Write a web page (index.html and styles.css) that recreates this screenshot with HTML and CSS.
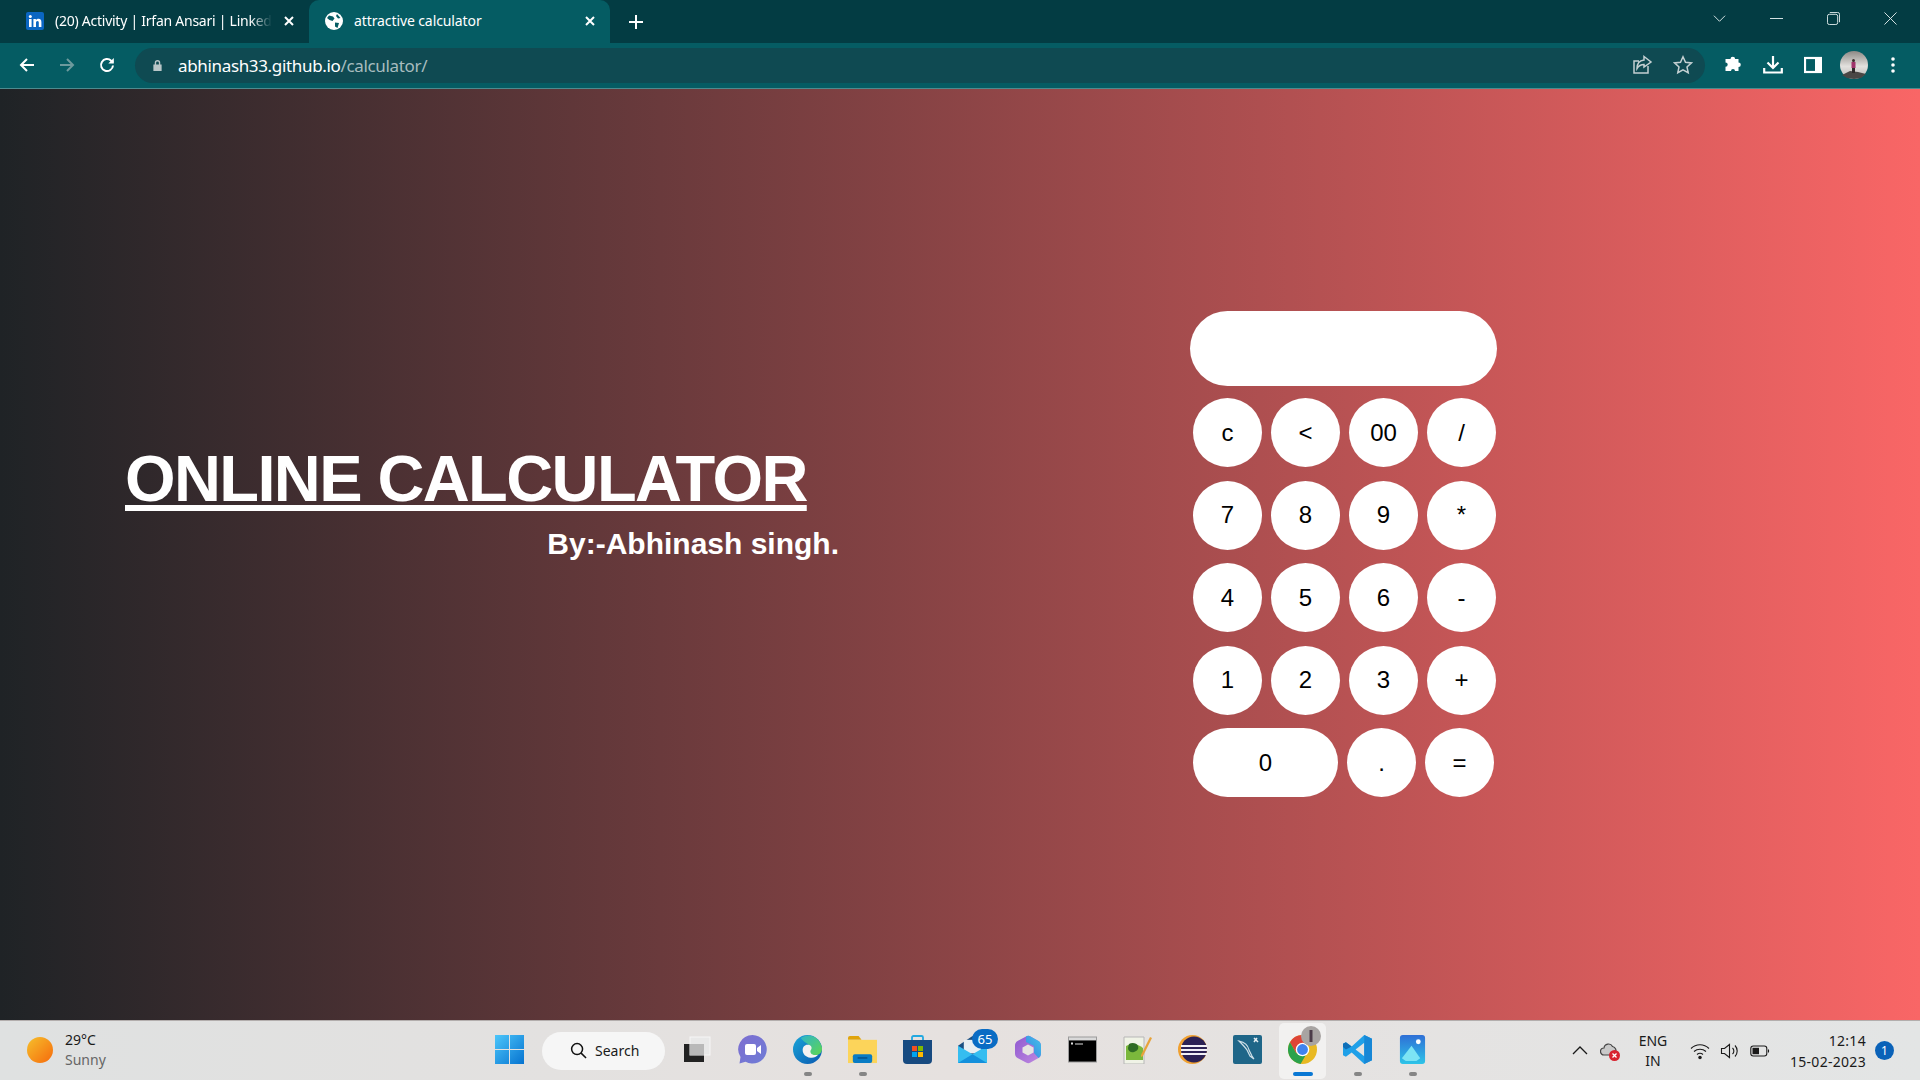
FILE: index.html
```html
<!DOCTYPE html>
<html>
<head>
    <title>attractive calculator</title>
    <link rel="stylesheet" href="styles.css">
</head>
<body>
    <!-- browser chrome -->
    <div class="tabstrip">
        <div class="tab">
            <svg class="favicon" viewBox="0 0 18 18"><rect width="18" height="18" rx="2" fill="#0a66c2"/><rect x="3" y="7" width="2.6" height="8" fill="#fff"/><circle cx="4.3" cy="4.4" r="1.5" fill="#fff"/><path d="M7.4 7h2.5v1.2c.5-.8 1.4-1.4 2.6-1.4 2.2 0 2.9 1.400 2.900 3.500V15h-2.600v-4.200c0-1-.3-1.800-1.300-1.800s-1.500.8-1.500 1.800V15H7.400z" fill="#fff"/></svg>
            <span class="tab-title fade">(20) Activity | Irfan Ansari | Linked</span>
            <svg class="tab-close" viewBox="0 0 12 12"><path d="M2 2l8 8M10 2l-8 8"/></svg>
        </div>
        <div class="tab active">
            <svg class="favicon" viewBox="0 0 18 18"><circle cx="9" cy="9" r="9" fill="#fff"/><path d="M4 3.500l4 1 1.500 2-2 2.500-3-1-2.500-2zM10 10.500l4 .5-1.500 5-2.500-1.500zM12 2l3.500 4-2.500 .5-2-2.500z" fill="#055c63"/></svg>
            <span class="tab-title">attractive calculator</span>
            <svg class="tab-close" viewBox="0 0 12 12"><path d="M2 2l8 8M10 2l-8 8"/></svg>
        </div>
        <svg class="new-tab" viewBox="0 0 16 16"><path d="M8 1v14M1 8h14"/></svg>
        <div class="win-controls">
            <svg class="win-btn chevron" viewBox="0 0 14 14"><path d="M1 4l6 6 6-6"/></svg>
            <svg class="win-btn" viewBox="0 0 14 14"><path d="M0 7h14"/></svg>
            <svg class="win-btn" viewBox="0 0 14 14"><rect x=".5" y="2.500" width="11" height="11" rx="2"/><path d="M3 .5h8.500a2 2 0 0 1 2 2V11"/></svg>
            <svg class="win-btn" viewBox="0 0 14 14"><path d="M.5 .5l13 13M13.500 .5l-13 13"/></svg>
        </div>
    </div>
    <div class="toolbar">
        <svg class="nav-icon" viewBox="0 0 18 18"><path d="M16 9H3M9 3L3 9l6 6"/></svg>
        <svg class="nav-icon dim" viewBox="0 0 18 18"><path d="M2 9h13M9 3l6 6-6 6"/></svg>
        <svg class="nav-icon" viewBox="0 0 18 18"><path d="M15 9.500A6 6 0 1 1 13.200 4.700L15 6.500"/><path class="solid" d="M15.800 2v5.500h-5.500z"/></svg>
        <div class="omnibox">
            <svg class="lock" viewBox="0 0 12 14"><path d="M3 6V4a3 3 0 0 1 6 0v2h1.500v7h-9V6zM4.500 6h3V4a1.500 1.500 0 0 0-3 0z"/></svg>
            <span class="url">abhinash33.github.io<span class="url-path">/calculator/</span></span>
            <svg class="omni-icon share" viewBox="0 0 20 20"><path d="M15 11v7H1V6h5M11 1.500l7 5.500-7 5V9.500c-3.500 0-5.500 1.500-7 4 0-5 3-8 7-8.500z"/></svg>
            <svg class="omni-icon" viewBox="0 0 20 20"><path d="M10 1.800l2.500 5.400 5.900.7-4.400 4 1.200 5.800-5.200-2.900-5.200 2.900 1.200-5.800-4.400-4 5.900-.7z"/></svg>
        </div>
        <svg class="tool-icon puzzle" viewBox="0 0 18 18"><path d="M6 3a2.300 2.300 0 0 1 4.600 0H14v3.500a2.300 2.300 0 0 1 0 4.600V15H10.500a2 2 0 0 0-4 0H1v-4.200a2.200 2.200 0 0 0 0-4.400V3z"/></svg>
        <svg class="tool-icon stroke download" viewBox="0 0 20 18"><path d="M10 0v11M4.500 6.500L10 12l5.500-5.500M1.200 12v4.500h17.600V12"/></svg>
        <svg class="tool-icon stroke panel" viewBox="0 0 18 16"><rect x="1" y="1" width="16" height="14"/><rect class="solid" x="11" y="1" width="6" height="14"/></svg>
        <svg class="avatar" viewBox="0 0 28 28">
            <defs><linearGradient id="sky" x1="0" y1="0" x2="0" y2="1"><stop offset="0" stop-color="#8d8985"/><stop offset=".55" stop-color="#e3e1de"/><stop offset="1" stop-color="#b9b6b4"/></linearGradient></defs>
            <circle cx="14" cy="14" r="14" fill="url(#sky)"/>
            <path d="M2 24l8-4 8 1 8 2-5 4-7 1-7-1z" fill="#4a4745"/>
            <rect x="11.500" y="11" width="4" height="6" fill="#a0336b"/><circle cx="13.500" cy="9.500" r="1.500" fill="#3a2a2a"/><rect x="12" y="17" width="3" height="5" fill="#2f2b2b"/>
        </svg>
        <svg class="menu-dots" viewBox="0 0 4 16"><circle cx="2" cy="2" r="1.800"/><circle cx="2" cy="8" r="1.800"/><circle cx="2" cy="14" r="1.800"/></svg>
    </div>

    <!-- the page itself -->
    <main class="page">
        <div class="hero">
            <h1>ONLINE CALCULATOR</h1>
            <h2>By:-Abhinash singh.</h2>
        </div>
        <form class="calc">
            <input class="display" type="text">
            <div class="row"><button type="button">c</button><button type="button">&lt;</button><button type="button">00</button><button type="button">/</button></div>
            <div class="row"><button type="button">7</button><button type="button">8</button><button type="button">9</button><button type="button">*</button></div>
            <div class="row"><button type="button">4</button><button type="button">5</button><button type="button">6</button><button type="button">-</button></div>
            <div class="row"><button type="button">1</button><button type="button">2</button><button type="button">3</button><button type="button">+</button></div>
            <div class="row"><button type="button" class="wide">0</button><button type="button">.</button><button type="button">=</button></div>
        </form>
    </main>

    <!-- windows taskbar -->
    <div class="taskbar">
        <div class="weather">
            <svg class="sun" viewBox="0 0 26 26">
                <defs><linearGradient id="sunfill" x1="0" y1="0" x2="1" y2="1"><stop offset="0" stop-color="#f6c02c"/><stop offset="1" stop-color="#f66a0c"/></linearGradient></defs>
                <circle cx="13" cy="13" r="13" fill="url(#sunfill)"/>
            </svg>
            <div class="weather-text"><span>29°C</span><span class="muted">Sunny</span></div>
        </div>
        <div class="slot">
            <svg class="app" viewBox="0 0 29 29">
                <defs><linearGradient id="win" x1="0" y1="0" x2="1" y2="1"><stop offset="0" stop-color="#4cc6fa"/><stop offset="1" stop-color="#0673d0"/></linearGradient></defs>
                <path d="M0 0h14v14H0zM15 0h14v14H15zM0 15h14v14H0zM15 15h14v14H15z" fill="url(#win)"/>
            </svg>
        </div>
        <div class="search">
            <svg class="search-icon" viewBox="0 0 18 18"><circle cx="7.500" cy="7.500" r="5.800"/><path d="M11.800 11.800L17 17"/></svg>
            <span>Search</span>
        </div>
        <div class="apps">
            <div class="slot">
                <svg class="app" viewBox="0 0 29 29"><rect x="1" y="9" width="20" height="18" fill="#222"/><rect x="7" y="2" width="20" height="18" fill="#e8e8e8" stroke="#f6f6f6"/><rect x="7" y="9" width="14" height="11" fill="#b9b9b9"/></svg>
            </div>
            <div class="slot">
                <svg class="app" viewBox="0 0 29 29">
                    <defs><linearGradient id="meet" x1="0" y1="0" x2="1" y2="1"><stop offset="0" stop-color="#7d6ed0"/><stop offset="1" stop-color="#6f7cd6"/></linearGradient></defs>
                    <path d="M14.500 0a14.300 14.300 0 1 1-7 26.800L1.500 28.500l1-6.500A14.300 14.300 0 0 1 14.500 0z" fill="url(#meet)"/>
                    <rect x="7" y="9" width="11" height="11" rx="2" fill="#fff"/><path d="M19 13l4-3v9l-4-3z" fill="#fff"/>
                </svg>
            </div>
            <div class="slot running">
                <svg class="app" viewBox="0 0 30 30">
                    <defs><linearGradient id="edge" x1="0" y1="0" x2="1" y2="1"><stop offset="0" stop-color="#1aa6d8"/><stop offset="1" stop-color="#0b58b0"/></linearGradient><linearGradient id="edge2" x1="0" y1="0" x2="1" y2="1"><stop offset="0" stop-color="#2fb5c8"/><stop offset="1" stop-color="#5fd64f"/></linearGradient></defs>
                    <circle cx="15" cy="15" r="15" fill="url(#edge)"/>
                    <path d="M8 3C15-2 27 0 30 13c.5 4-2 8-7 8-4 0-7-2-6-5 1-2 1-5-2-7-3-2-5-3-7-6z" fill="url(#edge2)"/>
                    <path d="M15 10c3 0 5 2 4 4.500-.5 1-1 1.500-1 2.500 0 3 4 4.500 8 3.500-2 2.500-5 3.500-8 3-5-.5-8-4-8-8 0-3 2-5.500 5-5.500z" fill="#f4f2f1"/>
                </svg>
            </div>
            <div class="slot running">
                <svg class="app" viewBox="0 0 30 28"><path d="M0 2a2 2 0 0 1 2-2h9l3 4h-14z" fill="#e0a40c"/><path d="M0 4h30v24H0z" fill="#fcd45a"/><rect x="5" y="19" width="20" height="9" rx="2" fill="#0a7cc4"/><rect x="10" y="22" width="10" height="1.500" fill="#07508a"/></svg>
            </div>
            <div class="slot">
                <svg class="app" viewBox="0 0 29 29"><path d="M9 7V2.500A1.500 1.500 0 0 1 10.500 1h8A1.500 1.500 0 0 1 20 2.500V7" fill="none" stroke="#22a8e0" stroke-width="1.800"/><path d="M0 5h29v20a4 4 0 0 1-4 4H4a4 4 0 0 1-4-4z" fill="#174a80"/><rect x="9" y="11" width="5" height="5" fill="#f25022"/><rect x="15" y="11" width="5" height="5" fill="#7fba00"/><rect x="9" y="17" width="5" height="5" fill="#00a4ef"/><rect x="15" y="17" width="5" height="5" fill="#ffb900"/></svg>
            </div>
            <div class="slot">
                <svg class="app" viewBox="0 0 30 28"><path d="M0 10L15 0l15 10v18H0z" fill="#1b4f82"/><path d="M6 4h18v14H6z" fill="#e8eef2"/><path d="M0 10l15 9 15-9v18H0z" fill="#35bdf0"/><path d="M0 28l15-9 15 9z" fill="#1490dc"/></svg>
                <span class="mail-badge">65</span>
            </div>
            <div class="slot">
                <svg class="app m365" viewBox="0 0 26 29">
                    <defs><linearGradient id="m1" x1="0" y1="0" x2="1" y2="1"><stop offset="0" stop-color="#8f58d0"/><stop offset="1" stop-color="#c08ae0"/></linearGradient><linearGradient id="m2" x1="0" y1="1" x2="1" y2="0"><stop offset="0" stop-color="#3c7fe0"/><stop offset="1" stop-color="#42c4ea"/></linearGradient></defs>
                    <path d="M11 1.500c1.500-1 3-1 4.500 0l8 4.500c1.500 1 2.500 2.500 2.500 4.500v8c0 2-1 3.500-2.500 4.500l-8 4.500c-1.500 1-3 1-4.500 0L2.500 23C1 22 0 20.500 0 18.500v-8C0 8.500 1 7 2.500 6z" fill="url(#m1)"/>
                    <path d="M11 1.500c1.500-1 3-1 4.500 0l8 4.500c1.500 1 2.500 2.500 2.500 4.500v8c0 2-1 3.500-2.500 4.500L19 18V11l-8-4z" fill="url(#m2)"/>
                    <path d="M13 9.500l5.500 3v5L13 20.500l-5.500-3v-5z" fill="#e6e3e1"/>
                </svg>
            </div>
            <div class="slot">
                <svg class="app" viewBox="0 0 29 26"><rect width="29" height="26" fill="#9b9b9b"/><rect x="1" y="1" width="27" height="3" fill="#d9d9d9"/><rect x="1" y="4" width="27" height="21" fill="#000"/><path d="M3 6h2v2H3zM7 7h8v1H7z" fill="#ddd"/></svg>
            </div>
            <div class="slot">
                <svg class="app" viewBox="0 0 29 29"><path d="M1 2h20v27H1z" fill="#f0f3e6" stroke="#b7b7b7"/><path d="M3 11c5-3 11-3 17 2v12H3z" fill="#7bb83c"/><path d="M6 9c3-2 8-1 9 2s-1 5-4 6-6-1-6-4z" fill="#2f6b24"/><path d="M18 20L27 2l2 1-9 18-2 1z" fill="#e8a33a"/></svg>
            </div>
            <div class="slot">
                <svg class="app" viewBox="0 0 29 29"><circle cx="14.500" cy="14.500" r="14.500" fill="#f0a030"/><circle cx="16" cy="14.500" r="13" fill="#2c2255"/><path d="M3 10h26v2H3zM3 14h26v2H3zM3 18h26v2H3z" fill="#f2f0f6"/></svg>
            </div>
            <div class="slot">
                <svg class="app" viewBox="0 0 29 29"><rect width="29" height="29" rx="2" fill="#1f6688"/><path d="M6 6c5 1 9 4 10 9l3 6 2 3-4-3-3-6C12 12 9 9 6 6z" fill="none" stroke="#cfe0e8" stroke-width="1.200"/><path d="M21 3l4 4M24 3l-3 4" stroke="#e6eef2" stroke-width="1.500"/></svg>
            </div>
            <div class="slot current">
                <svg class="app" viewBox="0 0 30 30">
                    <circle cx="15" cy="15" r="15" fill="#e8b923"/>
                    <path d="M15 0A15 15 0 0 0 2 7.500L8.500 19 15 9h13A15 15 0 0 0 15 0z" fill="#de4437"/>
                    <path d="M2 7.500A15 15 0 0 0 13 29.900L19.500 19l-11 0z" fill="#2ba24c"/>
                    <circle cx="15" cy="15" r="7" fill="#fff"/><circle cx="15" cy="15" r="5.600" fill="#3f83ee"/>
                </svg>
                <svg class="chrome-avatar" viewBox="0 0 20 20"><circle cx="10" cy="10" r="10" fill="#a8a4a2"/><rect x="8.500" y="4" width="3" height="12" fill="#4c3c48"/></svg>
            </div>
            <div class="slot running">
                <svg class="app" viewBox="0 0 30 30"><path d="M22 0l8 4v22l-8 4-13-12-6 4.500L0 21v-12l3-1.500 6 4.500z" fill="#1fa0e8"/><path d="M22 8l-9 7 9 7z" fill="#e4e3e2"/><path d="M22 0l8 4v22l-8 4V22V8z" fill="#1787d6"/><path d="M3 7.500l6 4.500-6 3-3-2.500v-3.500z" fill="#0f6fb8"/></svg>
            </div>
            <div class="slot running">
                <svg class="app" viewBox="0 0 26 30">
                    <defs><linearGradient id="ph" x1="0" y1="0" x2="0" y2="1"><stop offset="0" stop-color="#2f6fd6"/><stop offset="1" stop-color="#2dc4e8"/></linearGradient></defs>
                    <rect width="26" height="30" rx="3" fill="url(#ph)"/><circle cx="19" cy="7" r="2.500" fill="#fff"/><path d="M2 24L12 11l9 13-4 3H6z" fill="#7ce4f4"/>
                </svg>
            </div>
        </div>
        <div class="tray">
            <svg class="tray-chevron" viewBox="0 0 16 9"><path d="M1 8l7-7 7 7"/></svg>
            <svg class="tray-cloud" viewBox="0 0 20 20"><path d="M4 14a3.500 3.500 0 0 1 0-7 4.500 4.500 0 0 1 8.500-1.500A4 4 0 0 1 15 12v2z" fill="#c9c9c9" stroke="#444" stroke-width="1.200"/><circle cx="14.500" cy="14.500" r="5.500" fill="#d8232f"/><path d="M12.500 12.500l4 4M16.500 12.500l-4 4" stroke="#fff" stroke-width="1.300"/></svg>
            <div class="lang"><span>ENG</span><span>IN</span></div>
            <svg class="tray-icon" viewBox="0 0 20 20"><path d="M1 7.500c5-5 13-5 18 0M4 10.500c3.500-3 8.500-3 12 0M7 13.500c1.800-1.500 4.200-1.500 6 0"/><circle cx="10" cy="16.500" r="1.200" fill="#1a1a1a"/></svg>
            <svg class="tray-icon" viewBox="0 0 20 20"><path d="M1.500 7.500h3l5-4v13l-5-4h-3zM12.500 7a4 4 0 0 1 0 6M15 4.500a8 8 0 0 1 0 11"/></svg>
            <svg class="tray-icon" viewBox="0 0 20 20"><rect x=".8" y="5" width="16" height="10" rx="2.500"/><rect x="2.500" y="6.800" width="6.500" height="6.400" fill="#1a1a1a" stroke="none"/><path d="M18.500 8.500v3"/></svg>
            <div class="clock"><span>12:14</span><span>15-02-2023</span></div>
            <span class="notify">1</span>
        </div>
    </div>
</body>
</html>
```

FILE: styles.css
```css
* { box-sizing: border-box; }
html, body { margin: 0; height: 100%; }
body { width: 1920px; height: 1080px; overflow: hidden; display: flex; flex-direction: column; font-family: "Noto Sans", sans-serif; }
svg { display: block; flex-shrink: 0; }

/* tab strip */
.tabstrip { height: 43px; background: #033c43; display: flex; align-items: flex-end; padding-left: 8px; color: #fff; }
.tab { width: 301px; height: 43px; display: flex; align-items: center; padding: 0 14px 2px 18px; border-radius: 10px 10px 0 0; }
.tab.active { background: #055c63; padding-left: 16px; }
.favicon { width: 18px; height: 18px; }
.tab-title { margin-left: 11px; font-size: 14px; white-space: nowrap; letter-spacing: -.25px; }
.tab.active .tab-title { letter-spacing: -.1px; }
.fade { -webkit-mask-image: linear-gradient(to right, #000 90%, transparent); mask-image: linear-gradient(to right, #000 90%, transparent); }
.tab-close { width: 12px; height: 12px; margin-left: auto; fill: none; stroke: #fff; stroke-width: 2; }
.new-tab { width: 16px; height: 16px; margin: 0 0 13px 18px; fill: none; stroke: #fff; stroke-width: 2; }
.win-controls { margin-left: auto; height: 43px; display: flex; align-items: flex-start; padding: 12px 23px 0 0; gap: 44px; }
.win-btn { width: 13px; height: 13px; fill: none; stroke: #e4eeee; stroke-width: 1; }

/* toolbar */
.toolbar { height: 46px; background: #055c63; border-bottom: 1px solid #4d8b8f; display: flex; align-items: center; padding: 0 0 1px 18px; }
.nav-icon { width: 18px; height: 18px; margin-right: 22px; fill: none; stroke: #fff; stroke-width: 2; }
.nav-icon.dim { stroke: #6d9a9d; }
.nav-icon .solid { fill: #fff; stroke: none; }
.omnibox { width: 1570px; height: 35px; margin-left: -3px; border-radius: 18px; background: #0f4a52; display: flex; align-items: center; padding: 0 12px 0 17px; }
.lock { width: 11px; height: 13px; fill: #b9c6c8; }
.url { flex: 1; margin-left: 15px; font-size: 17px; color: #fff; letter-spacing: -.34px; }
.url-path { color: #a7bcbf; }
.omni-icon { width: 20px; height: 20px; margin-left: 20px; fill: none; stroke: #c4d0d2; stroke-width: 1.500; }
.tool-icon { margin-left: 19px; width: 19px; height: 18px; fill: #fff; }
.tool-icon.stroke { fill: none; stroke: #fff; stroke-width: 2.200; }
.download { width: 20px; margin-left: 20px; }
.panel { width: 18px; margin-left: 21px; }
.panel .solid { fill: #fff; stroke: none; }
.avatar { width: 28px; height: 28px; margin-left: 18px; }
.menu-dots { width: 4px; height: 16px; margin-left: 23px; fill: #fff; }

/* page */
.page { height: 931px; display: flex; align-items: center; background: linear-gradient(to right, #1f2326, #f96666); }
.hero { width: 714px; margin: 0 351px 108px 125px; color: #fff; font-family: "Liberation Sans", Arial, sans-serif; }
h1 { margin: 0; font-size: 65px; line-height: 75px; letter-spacing: -1.600px; text-decoration: underline; }
h2 { margin: 11px 0 0; font-size: 30px; line-height: 34px; text-align: right; }
.calc { width: 307px; display: flex; flex-direction: column; margin-bottom: 1px; font-family: "Liberation Sans", Arial, sans-serif; }
.display { width: 307px; height: 75px; border: none; border-radius: 38px; background: #fff; margin-bottom: 12px; }
.row { display: flex; gap: 9px; padding-left: 3px; margin-bottom: 13.500px; }
.row:last-child { margin-bottom: 0; }
.row button { width: 69px; height: 69px; padding: 0; border: none; border-radius: 50%; background: #fff; color: #000; font-family: inherit; font-size: 24px; cursor: pointer; }
.row .wide { width: 145px; border-radius: 35px; }

/* taskbar */
.taskbar { height: 60px; display: flex; align-items: center; background: linear-gradient(to right, #dfe1e1, #e6e1df 50%, #e3e5e5); border-top: 1px solid #b3aead; font-size: 14px; color: #1a1a1a; }
.weather { width: 482px; display: flex; align-items: center; padding: 0 0 2px 27px; }
.sun { width: 26px; height: 26px; }
.weather-text { display: flex; flex-direction: column; margin-left: 12px; font-size: 14px; line-height: 20px; }
.muted { color: #666; }
.slot { width: 55px; height: 59px; position: relative; display: flex; align-items: center; justify-content: center; padding-bottom: 2px; }
.app { width: 29px; height: 29px; }
.m365 { width: 26px; }
.search { width: 123px; height: 38px; margin: 0 5px 0 5px; border-radius: 19px; background: #f6f6f6; display: flex; align-items: center; padding-left: 28px; font-size: 14px; }
.search-icon { width: 17px; height: 17px; margin-right: 8px; fill: none; stroke: #111; stroke-width: 1.600; }
.apps { display: flex; }
.running::after { content: ""; position: absolute; left: 24px; bottom: 4px; width: 8px; height: 4px; border-radius: 2px; background: #858585; }
.current::before { content: ""; position: absolute; left: 4px; right: 4px; top: 2px; bottom: 1px; border-radius: 5px; background: #f2f1f0; }
.current::after { content: ""; position: absolute; left: 18px; bottom: 4px; width: 20px; height: 4px; border-radius: 2px; background: #0a78d4; }
.current .app { position: relative; }
.chrome-avatar { position: absolute; right: 9px; top: 5px; width: 20px; height: 20px; }
.mail-badge { position: absolute; left: 27px; top: 8px; width: 26px; height: 20px; border-radius: 10px; background: #0a6cc4; color: #fff; font-size: 13px; line-height: 20px; text-align: center; }
.tray { display: flex; align-items: center; margin-left: 132px; }
.tray-chevron { width: 16px; height: 9px; fill: none; stroke: #1a1a1a; stroke-width: 1.300; }
.tray-cloud { width: 20px; height: 20px; margin-left: 12px; }
.lang { width: 50px; margin: 0 12px 0 8px; display: flex; flex-direction: column; align-items: center; line-height: 20px; }
.tray-icon { width: 20px; height: 20px; margin-right: 10px; fill: none; stroke: #1a1a1a; stroke-width: 1.100; }
.clock { width: 76px; margin-left: 10px; display: flex; flex-direction: column; align-items: flex-end; line-height: 21px; letter-spacing: .3px; white-space: nowrap; }
.notify { width: 19px; height: 19px; margin-left: 9px; border-radius: 50%; background: #0a62b8; color: #fff; font-size: 12px; line-height: 19px; text-align: center; }
```
